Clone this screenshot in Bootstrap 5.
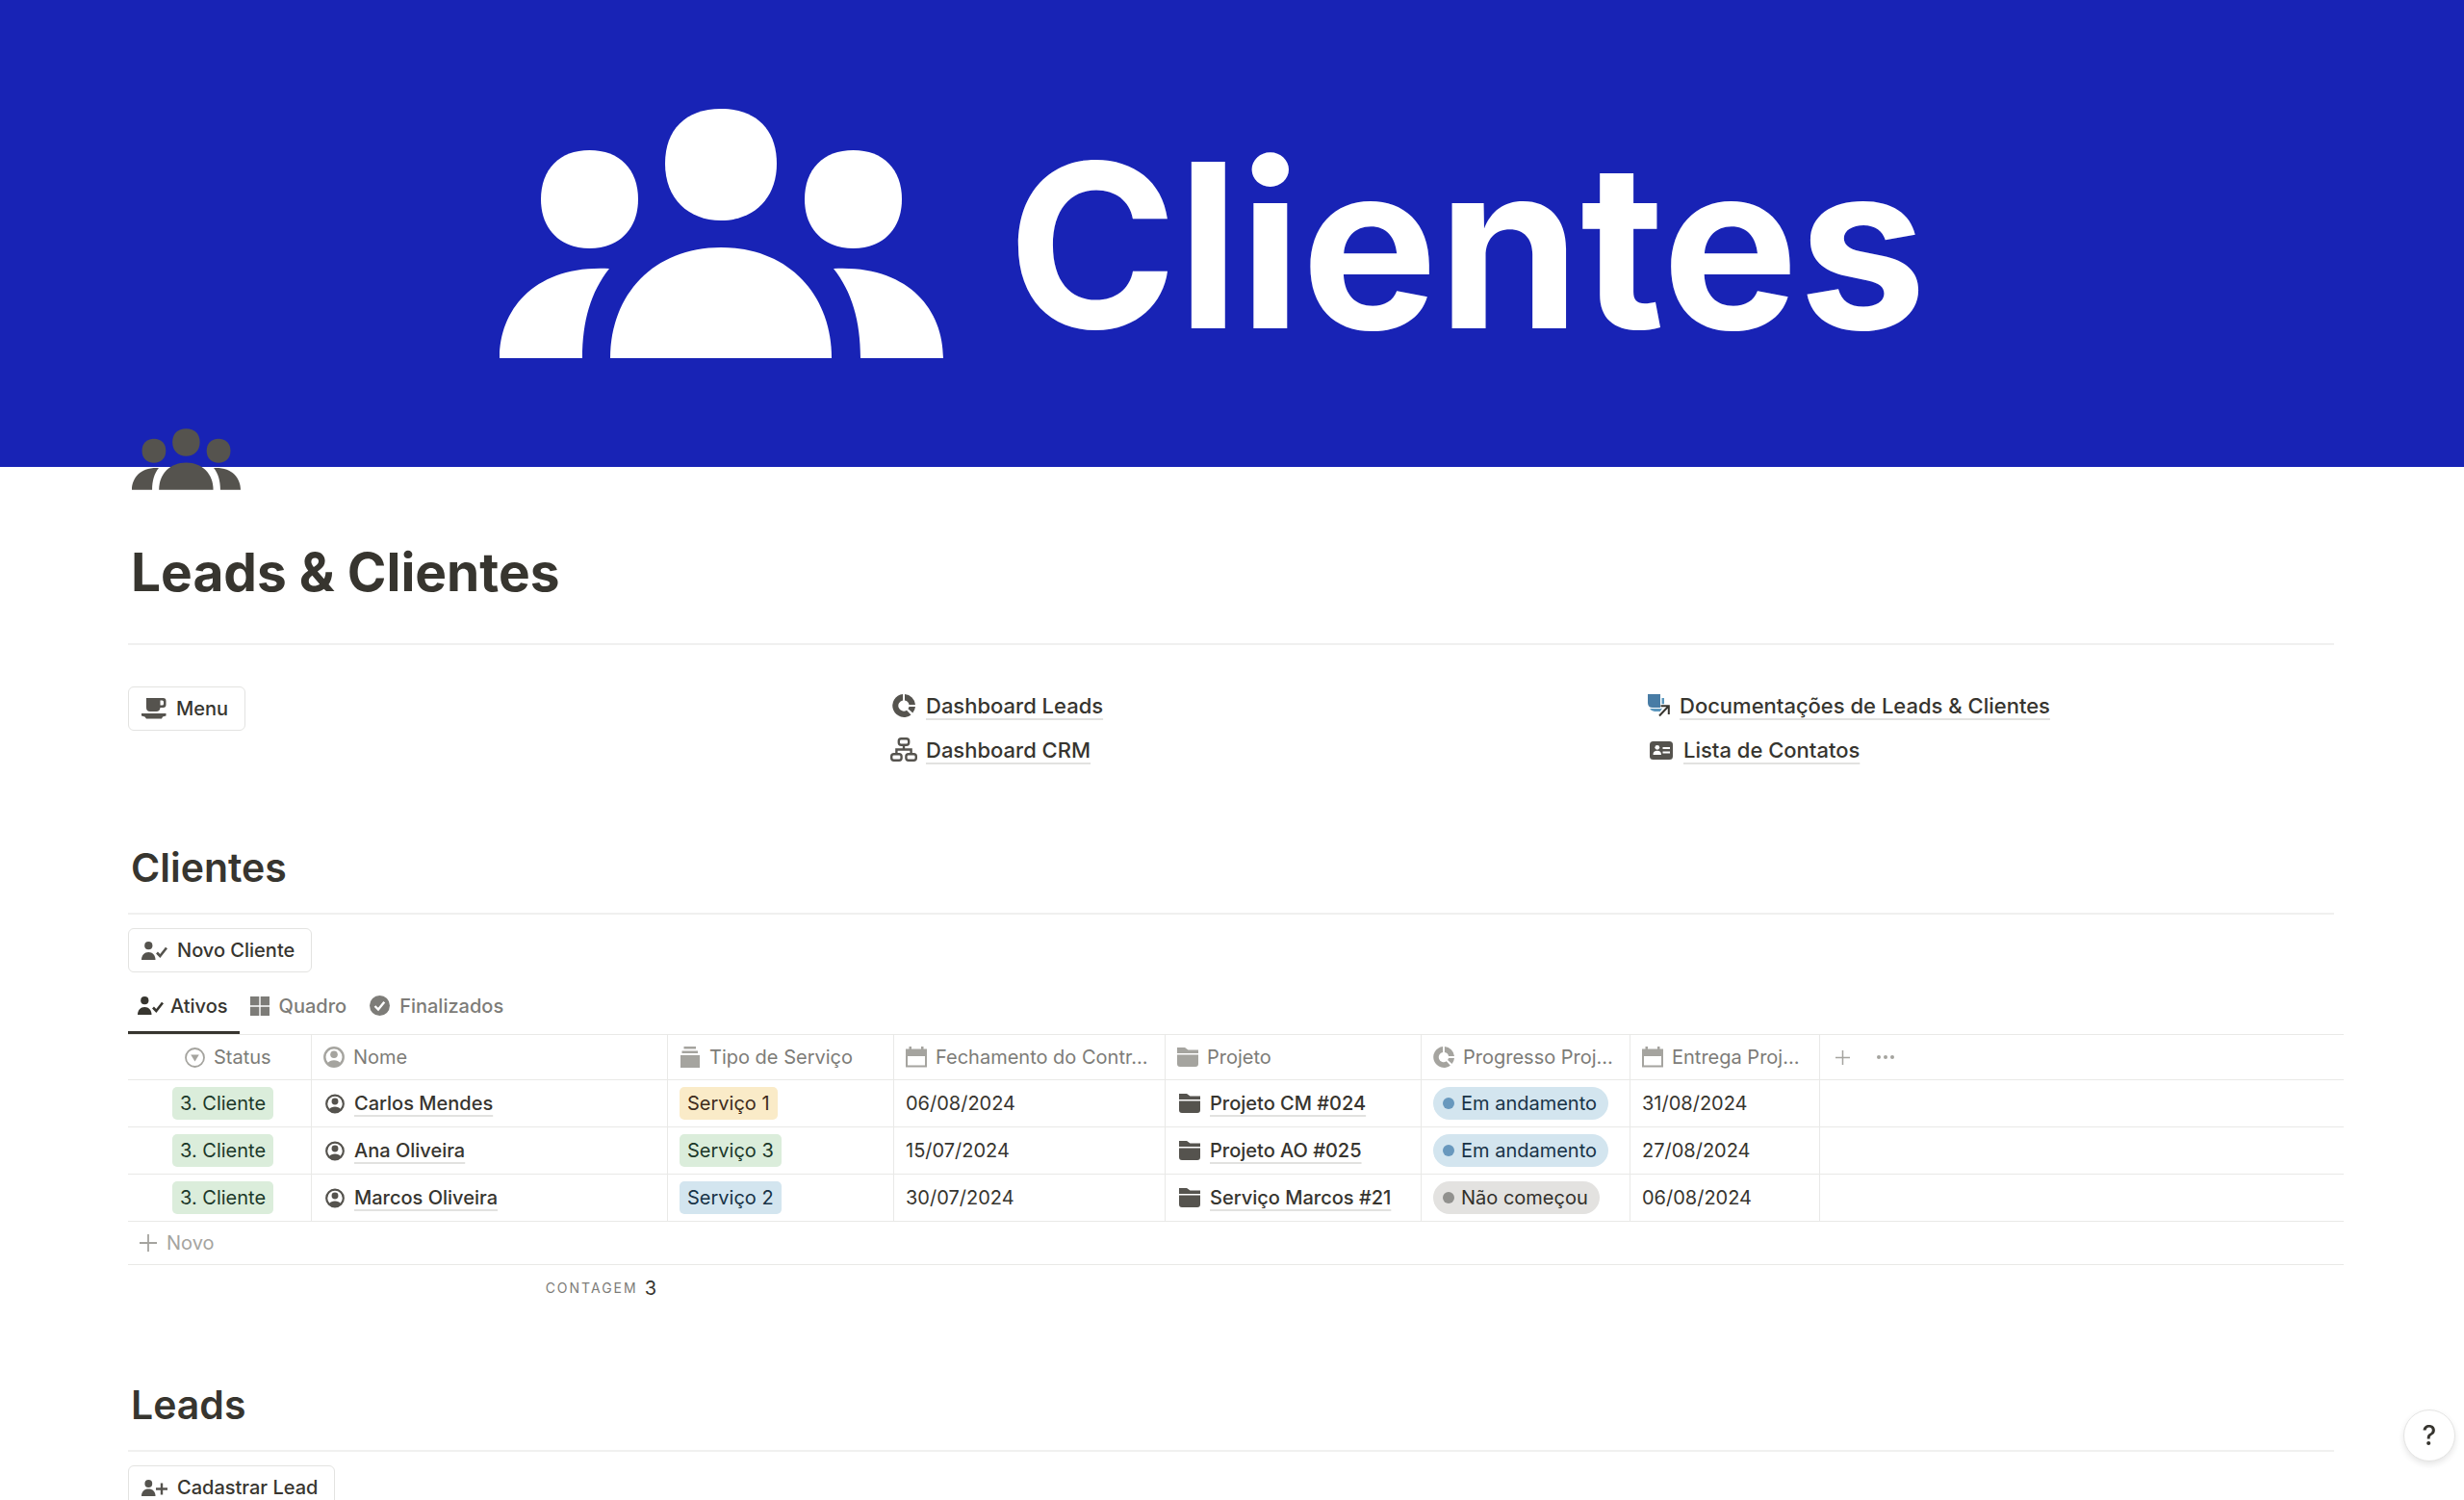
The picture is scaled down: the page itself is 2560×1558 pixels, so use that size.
<!DOCTYPE html>
<html lang="pt-BR">
<head>
<meta charset="utf-8">
<meta name="viewport" content="width=device-width, initial-scale=1">
<title>Leads &amp; Clientes</title>
<link href="https://cdn.jsdelivr.net/npm/bootstrap@5.3.0/dist/css/bootstrap.min.css" rel="stylesheet">
<style>
  :root { --ink: #37352f; --soft: #7d7c78; --faint: #a5a49f; --glyph: #55534e; --line: #e9e9e7; }
  body { font-family: Inter, "Liberation Sans", sans-serif; color: var(--ink); font-size: 20px; line-height: 28px; background: #fff; overflow: hidden; height: 100vh; }
  svg { display: block; flex: none; fill: currentColor; }
  .cover { background: #1823b5; height: 485px; color: #fff; padding: 113px 0 0 519px; gap: 67px; }
  .cover-art { width: 461px; height: 259px; }
  .cover-word { font-size: 238px; line-height: 282px; font-weight: 700; }
  .page { padding: 0 135px 0 133px; }
  .page-icon { width: 113px; height: 64px; margin: -40px 0 0 4px; position: relative; color: var(--glyph); }
  .page-title { font-size: 55px; line-height: 70px; font-weight: 700; margin: 50px 0 39px 3px; }
  .section-title { font-size: 41px; line-height: 52px; font-weight: 600; margin: 0 0 21px 3px; }
  .rule { border: 0; border-top: 2px solid #f0f0ef; opacity: 1; margin: 0; }
  .links-row { --bs-gutter-x: 69px; padding-top: 43px; height: 205px; }
  .btn-box { display: flex; width: fit-content; align-items: center; gap: 10px; height: 46px; padding: 0 17px 0 13px; border: 1px solid #e3e3e1; border-radius: 6px; font-size: 20px; font-weight: 500; color: var(--ink); background: #fff; line-height: 28px; }
  .btn-box svg { color: var(--glyph); }
  .below-rule { margin-top: 14px; }
  .page-link-row { display: flex; align-items: center; gap: 9px; height: 46px; color: var(--glyph); }
  .plink { color: var(--ink); font-weight: 500; text-decoration: underline; text-decoration-color: #e2e2e0; text-decoration-thickness: 2px; text-underline-offset: 5px; text-decoration-skip-ink: none; }
  .big-link { font-size: 22px; }
  .links-block { margin-top: -3px; padding-left: 5px; }
  .tabs { height: 64px; }
  .tab-btn { display: flex; align-items: center; gap: 10px; border: 0; background: none; padding: 8px 13px 0 11px; font-weight: 500; color: var(--soft); border-bottom: 3px solid transparent; }
  .tab-btn.active { color: var(--ink); border-bottom-color: var(--ink); padding: 8px 12px 0 10px; gap: 7px; }
  .db { table-layout: fixed; width: calc(100% + 10px); border-collapse: separate; border-spacing: 0; }
  .db th, .db td { padding: 0 12px; border-bottom: 1px solid var(--line); border-right: 1px solid var(--line); white-space: nowrap; overflow: hidden; height: 49px; vertical-align: middle; }
  .db th { border-top: 1px solid var(--line); height: 48px; font-weight: 400; color: var(--soft); }
  .db th svg { color: var(--faint); }
  .db th:last-child, .db td:last-child { border-right: 0; }
  .db th:first-child { padding-left: 59px; }
  .db td:first-child { padding-left: 46px; padding-right: 0; }
  .db .cellrow { display: flex; align-items: center; gap: 9px; }
  .db td .cellrow { color: var(--glyph); gap: 10px; padding-left: 2px; }
  .w-status { width: 191px; } .w-name { width: 370px; } .w-type { width: 235px; } .w-close { width: 282px; }
  .w-proj { width: 266px; } .w-prog { width: 217px; } .w-due { width: 197px; }
  .tag { display: inline-block; height: 34px; line-height: 34px; padding: 0 8px; border-radius: 5px; vertical-align: middle; }
  .tag-green { background: #dbeddb; color: #1c3829; }
  .tag-yellow { background: #faebc8; color: #402c1b; }
  .tag-blue { background: #d3e5ef; color: #183347; }
  .pill { display: inline-flex; align-items: center; gap: 7px; height: 34px; padding: 0 12px 0 10px; border-radius: 17px; vertical-align: middle; }
  .pill::before { content: ""; width: 12px; height: 12px; border-radius: 50%; background: #6898bd; }
  .pill-gray { background: #e3e2e0; color: #32302c; }
  .pill-gray::before { background: #91918e; }
  .new-row { display: flex; align-items: center; gap: 10px; height: 45px; width: calc(100% + 10px); border: 0; border-bottom: 1px solid var(--line); background: none; padding: 0 12px; color: var(--faint); text-align: left; }
  .count { width: 549px; height: 48px; justify-content: flex-end; gap: 7px; }
  .count-label { font-size: 14px; letter-spacing: 2px; color: var(--soft); }
  .next-section { padding-top: 71px; }
  .help { position: fixed; right: 9px; bottom: 40px; width: 54px; height: 54px; border-radius: 50%; border: 1px solid #e4e4e3; background: #fff; box-shadow: 0 3px 6px rgba(0,0,0,.1); font-size: 28px; font-weight: 500; color: var(--ink); padding: 0; }
</style>
</head>
<body>
<svg width="0" height="0" class="position-absolute" aria-hidden="true">
  <symbol id="people" viewBox="0 0 461 259">
    <path d="M230 0C267 0 288 22 288 57C288 93 264 116 230 116C196 116 172 93 172 57C172 22 193 0 230 0Z"/>
    <path d="M93.500 43C125 43 144 63 144 94C144 125 124 145 93.500 145C63 145 43 125 43 94C43 63 62 43 93.500 43Z"/>
    <path d="M367.500 43C399 43 418 63 418 94C418 125 398 145 367.500 145C337 145 317 125 317 94C317 63 336 43 367.500 43Z"/>
    <path d="M115 259C115 193 160 144 230 144C300 144 345 193 345 259Z"/>
    <path d="M0 259C0 207 38 162 114 166C95 190 86 220 86 259Z"/>
    <path d="M461 259C461 207 423 162 347 166C366 190 375 220 375 259Z"/>
  </symbol>
  <symbol id="usercheck" viewBox="0 0 27 19">
    <circle cx="7.300" cy="4.200" r="4.100"/><path d="M0 19C0 14 3 11 7.300 11C11.500 11 14.500 14 14.500 19Z"/>
    <path d="M16 11.500L19.300 15L26 6.500" fill="none" stroke="currentColor" stroke-width="2.600"/>
  </symbol>
  <symbol id="userplus" viewBox="0 0 27 17">
    <circle cx="7.300" cy="4" r="3.900"/><path d="M0 17C0 12 3 9.500 7.300 9.500C11.500 9.500 14.500 12 14.500 17Z"/>
    <path d="M15 9.500H27M21 3.500V15.500" fill="none" stroke="currentColor" stroke-width="2.400"/>
  </symbol>
  <symbol id="cup" viewBox="0 0 26 22">
    <path fill-rule="evenodd" d="M5 0H22.500Q25.500 0 25.500 3V7Q25.500 10 22.500 10H19.500Q19 14 15.500 14H9Q5 14 5 10ZM19.500 2.500V7.500H21.500Q23 7.500 23 6V4Q23 2.500 21.500 2.500Z"/>
    <path d="M0 16H25.500V18.500L22 19.500L21 21.500H5L3.500 19.500L0 18.500Z"/>
  </symbol>
  <symbol id="donut" viewBox="0 0 24 24">
    <path d="M11 0V6.500A5.600 5.600 0 1 0 15 16.700L19.500 21.500A12 12 0 1 1 11 0Z"/>
    <path d="M13 0A12 12 0 0 1 24 11H17.500A5.600 5.600 0 0 0 13 6.500Z"/>
    <path d="M17.500 13H24A12 12 0 0 1 21.300 19.500L16.500 15.200Z"/>
  </symbol>
  <symbol id="org" viewBox="0 0 28 26">
    <g fill="none" stroke="currentColor" stroke-width="2.400"><rect x="8.800" y="1.200" width="10.400" height="6.600" rx="2.500"/><rect x="1.200" y="17.200" width="10.400" height="6.600" rx="2.500"/><rect x="16.400" y="17.200" width="10.400" height="6.600" rx="2.500"/><path d="M14 8V12.500M6.400 17V12.500H21.600V17"/></g>
  </symbol>
  <symbol id="docs" viewBox="0 0 24 24">
    <path fill="#5b97bd" d="M14.500 4H17V11L13 18H7Q4 18 2 15H14.500Z"/>
    <path fill="#487ca5" d="M0 0H13V14H5Q0 14 0 9Z"/>
    <path d="M12.500 21.500L21.500 12.500M13.500 12.200H21.800V21" fill="none" stroke="#fff" stroke-width="4"/>
    <path d="M12 22.500L21.500 12.500M13.500 12.200H21.800V21" fill="none" stroke="#37352f" stroke-width="2"/>
  </symbol>
  <symbol id="idcard" viewBox="0 0 24 19">
    <rect width="24" height="19" rx="3.500"/>
    <g fill="#fff"><circle cx="7.800" cy="6.300" r="2.400"/><path d="M3.500 14C3.500 11 5 9.800 7.800 9.800C10.500 9.800 12 11 12 14ZM13.500 6H21V8H13.500ZM13.500 10.500H21V12.500H13.500Z"/></g>
  </symbol>
  <symbol id="gridico" viewBox="0 0 20 20"><path d="M0 0H9.300V9.300H0ZM10.700 0H20V9.300H10.700ZM0 10.700H9.300V20H0ZM10.700 10.700H20V20H10.700Z"/></symbol>
  <symbol id="okcircle" viewBox="0 0 21 21"><circle cx="10.500" cy="10.500" r="10.500"/><path d="M5.500 11L9 14.500L15.300 6.800" fill="none" stroke="#fff" stroke-width="2.400"/></symbol>
  <symbol id="select" viewBox="0 0 21 21"><circle cx="10.500" cy="10.500" r="9.500" fill="none" stroke="currentColor" stroke-width="1.800"/><path d="M6.200 7.500H14.800L10.500 14.500Z"/></symbol>
  <symbol id="person" viewBox="0 0 22 22"><circle cx="11" cy="11" r="9.700" fill="none" stroke="currentColor" stroke-width="2.400"/><circle cx="11" cy="8.300" r="3.800"/><path d="M4 17.500C6 15.200 8 14.300 11 14.300C14 14.300 16 15.200 18 17.500Q15 21 11 21Q7 21 4 17.500Z"/></symbol>
  <symbol id="stackico" viewBox="0 0 22 22"><path d="M4.500 0H17V2.500H4.500ZM2.500 4.500H19V7H2.500ZM1 9H21V22H1Z"/></symbol>
  <symbol id="cal" viewBox="0 0 22 22"><path fill-rule="evenodd" d="M0 2.500H3.500V0H6V2.500H16V0H18.500V2.500H22V21.500H0ZM2 10V19.500H20V10Z"/></symbol>
  <symbol id="folder" viewBox="0 0 22 20"><path d="M0 0H8L11.500 2.500H22V6H0ZM0 7.500H22V17Q22 20 19 20H3Q0 20 0 17Z"/></symbol>
  <symbol id="plus" viewBox="0 0 18 18"><path d="M9 0V18M0 9H18" stroke="currentColor" stroke-width="1.800" fill="none"/></symbol>
  <symbol id="dots" viewBox="0 0 18 4"><circle cx="2" cy="2" r="2"/><circle cx="9" cy="2" r="2"/><circle cx="16" cy="2" r="2"/></symbol>
</svg>

<header class="cover d-flex align-items-start">
  <svg class="cover-art"><use href="#people"/></svg>
  <div class="cover-word">Clientes</div>
</header>

<main class="page">
  <svg class="page-icon"><use href="#people"/></svg>
  <h1 class="page-title">Leads &amp; Clientes</h1>
  <hr class="rule">

  <div class="row links-row">
    <div class="col-4">
      <button type="button" class="btn-box"><svg width="26" height="22"><use href="#cup"/></svg>Menu</button>
    </div>
    <div class="col-4"><div class="links-block">
      <div class="page-link-row"><svg width="28" height="24"><use href="#donut"/></svg><a href="#" class="plink big-link">Dashboard Leads</a></div>
      <div class="page-link-row"><svg width="28" height="26"><use href="#org"/></svg><a href="#" class="plink big-link">Dashboard CRM</a></div>
    </div></div>
    <div class="col-4"><div class="links-block">
      <div class="page-link-row"><svg width="24" height="24"><use href="#docs"/></svg><a href="#" class="plink big-link">Documentações de Leads &amp; Clientes</a></div>
      <div class="page-link-row"><svg width="28" height="19"><use href="#idcard"/></svg><a href="#" class="plink big-link">Lista de Contatos</a></div>
    </div></div>
  </div>

  <section>
    <h2 class="section-title">Clientes</h2>
    <hr class="rule">
    <button type="button" class="btn-box below-rule"><svg width="27" height="19"><use href="#usercheck"/></svg>Novo Cliente</button>
    <div class="tabs d-flex align-items-stretch" role="tablist">
      <button type="button" role="tab" class="tab-btn active"><svg width="27" height="19"><use href="#usercheck"/></svg>Ativos</button>
      <button type="button" role="tab" class="tab-btn"><svg width="20" height="20"><use href="#gridico"/></svg>Quadro</button>
      <button type="button" role="tab" class="tab-btn"><svg width="21" height="21"><use href="#okcircle"/></svg>Finalizados</button>
    </div>
    <table class="db">
      <colgroup><col class="w-status"><col class="w-name"><col class="w-type"><col class="w-close"><col class="w-proj"><col class="w-prog"><col class="w-due"><col></colgroup>
      <thead>
        <tr>
          <th><div class="cellrow"><svg width="21" height="21"><use href="#select"/></svg>Status</div></th>
          <th><div class="cellrow"><svg width="22" height="22"><use href="#person"/></svg>Nome</div></th>
          <th><div class="cellrow"><svg width="22" height="22"><use href="#stackico"/></svg>Tipo de Serviço</div></th>
          <th><div class="cellrow"><svg width="22" height="22"><use href="#cal"/></svg>Fechamento do Contr…</div></th>
          <th><div class="cellrow"><svg width="22" height="20"><use href="#folder"/></svg>Projeto</div></th>
          <th><div class="cellrow"><svg width="22" height="22"><use href="#donut"/></svg>Progresso Proj…</div></th>
          <th><div class="cellrow"><svg width="22" height="22"><use href="#cal"/></svg>Entrega Proj…</div></th>
          <th><div class="d-flex align-items-center ps-1"><svg width="15" height="15" class="me-4"><use href="#plus"/></svg><svg width="18" height="4" class="ms-1"><use href="#dots"/></svg></div></th>
        </tr>
      </thead>
      <tbody>
        <tr>
          <td><span class="tag tag-green">3. Cliente</span></td>
          <td><div class="cellrow"><svg width="20" height="21"><use href="#person"/></svg><a href="#" class="plink">Carlos Mendes</a></div></td>
          <td><span class="tag tag-yellow">Serviço 1</span></td>
          <td>06/08/2024</td>
          <td><div class="cellrow"><svg width="22" height="20"><use href="#folder"/></svg><a href="#" class="plink">Projeto CM #024</a></div></td>
          <td><span class="pill tag-blue">Em andamento</span></td>
          <td>31/08/2024</td><td></td>
        </tr>
        <tr>
          <td><span class="tag tag-green">3. Cliente</span></td>
          <td><div class="cellrow"><svg width="20" height="21"><use href="#person"/></svg><a href="#" class="plink">Ana Oliveira</a></div></td>
          <td><span class="tag tag-green">Serviço 3</span></td>
          <td>15/07/2024</td>
          <td><div class="cellrow"><svg width="22" height="20"><use href="#folder"/></svg><a href="#" class="plink">Projeto AO #025</a></div></td>
          <td><span class="pill tag-blue">Em andamento</span></td>
          <td>27/08/2024</td><td></td>
        </tr>
        <tr>
          <td><span class="tag tag-green">3. Cliente</span></td>
          <td><div class="cellrow"><svg width="20" height="21"><use href="#person"/></svg><a href="#" class="plink">Marcos Oliveira</a></div></td>
          <td><span class="tag tag-blue">Serviço 2</span></td>
          <td>30/07/2024</td>
          <td><div class="cellrow"><svg width="22" height="20"><use href="#folder"/></svg><a href="#" class="plink">Serviço Marcos #21</a></div></td>
          <td><span class="pill pill-gray">Não começou</span></td>
          <td>06/08/2024</td><td></td>
        </tr>
      </tbody>
    </table>
    <button type="button" class="new-row"><svg width="18" height="18"><use href="#plus"/></svg>Novo</button>
    <div class="count d-flex align-items-center"><span class="count-label">CONTAGEM</span><span>3</span></div>
  </section>

  <section class="next-section">
    <h2 class="section-title">Leads</h2>
    <hr class="rule">
    <button type="button" class="btn-box below-rule"><svg width="27" height="17"><use href="#userplus"/></svg>Cadastrar Lead</button>
  </section>
</main>
<button type="button" class="help" aria-label="Ajuda">?</button>
<script src="https://cdn.jsdelivr.net/npm/bootstrap@5.3.0/dist/js/bootstrap.bundle.min.js"></script>
</body>
</html>
